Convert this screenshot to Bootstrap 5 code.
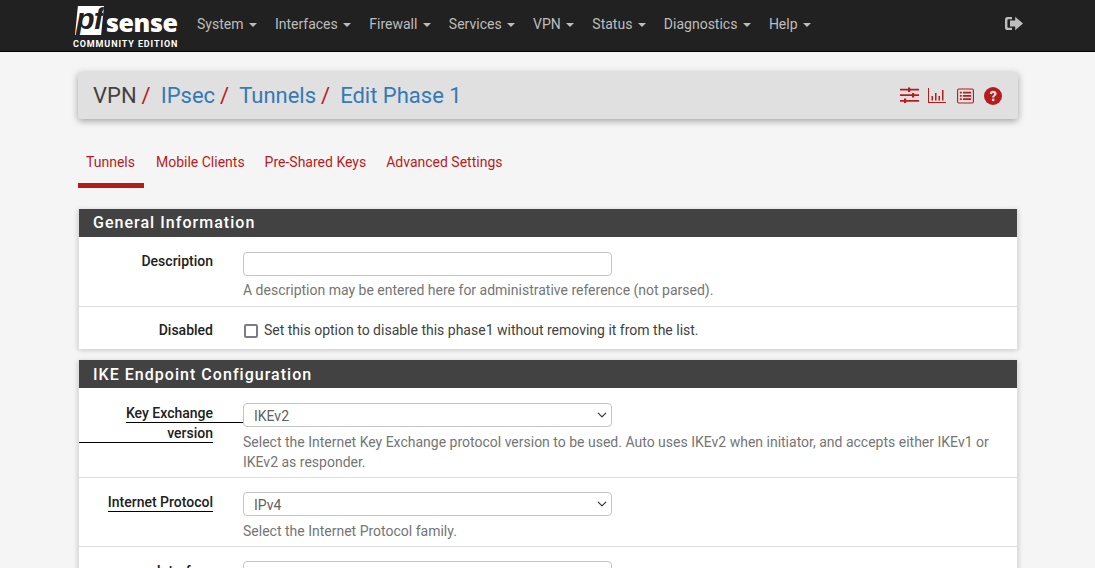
<!DOCTYPE html>
<html lang="en">
  <head>
    <meta charset="UTF-8" />
    <meta name="viewport" content="width=device-width, initial-scale=1.0" />
    <title>VPN: IPsec: Tunnels: Edit Phase 1</title>
    <link
      rel="stylesheet"
      href="https://cdn.jsdelivr.net/npm/bootstrap@5.3.0/dist/css/bootstrap.min.css"
    />
    <style>
      html,
      body {
        height: 568px;
        overflow: hidden;
      }
      body {
        background: #f5f5f5;
        font-family: Roboto, "Liberation Sans", sans-serif;
        font-size: 14px;
        color: #212121;
      }
      #top-bar {
        background: #212121;
        height: 52px;
        border-bottom: 1px solid #000;
        padding: 0 72px 3px 72px;
        flex-wrap: nowrap;
      }
      #logo {
        width: 106px;
        height: 46px;
        margin-right: 10px;
        margin-top: 3px;
        color: #fff;
        text-decoration: none;
        display: block;
        line-height: 1;
      }
      .logo-top {
        height: 30px;
        margin-top: 3px;
      }
      .logo-pf {
        background: #fff;
        color: #212121;
        width: 29px;
        height: 29px;
        margin-left: 3px;
        font: italic 700 30px/25px "Liberation Sans", sans-serif;
        letter-spacing: -1px;
        clip-path: polygon(10% 0, 100% 0, 90% 100%, 0 100%);
        text-align: center;
      }
      .logo-sense {
        font: 800 25px/32px "Open Sans", sans-serif;
        letter-spacing: -0.4px;
        margin-left: 2px;
        margin-top: 0;
      }
      .logo-edition {
        font: 700 9px/10px Roboto, sans-serif;
        letter-spacing: 0.88px;
        margin-top: 3px;
        margin-left: 1px;
        white-space: nowrap;
      }
      #top-bar .nav-link {
        color: #bdbdbd;
        padding: 0 9px;
        font-size: 14px;
        line-height: 20px;
      }
      .top-caret {
        display: inline-block;
        margin-left: 2px;
        vertical-align: 2px;
        border-top: 4px solid;
        border-left: 4px solid transparent;
        border-right: 4px solid transparent;
      }
      #logout-link {
        margin-bottom: 1px;
      }
      #page-wrap {
        width: 940px;
        margin-left: 78px;
      }
      #crumb-bar {
        height: 47px;
        margin-top: 20px;
        background: #e0e0e0;
        border-radius: 3px;
        box-shadow: 0 2px 7px rgba(0, 0, 0, 0.35);
        padding: 0 16px 0 15px;
      }
      #crumb-bar .breadcrumb {
        font-size: 22px;
        line-height: 30px;
        color: #424242;
        --bs-breadcrumb-item-padding-x: 0;
        --bs-breadcrumb-margin-bottom: 0;
        --bs-breadcrumb-divider: "";
      }
      #crumb-bar .breadcrumb-item + .breadcrumb-item::before {
        content: none;
      }
      #crumb-bar a {
        color: #337ab7;
        text-decoration: none;
      }
      .crumb-sep {
        color: #b71c1c;
        margin: 0 10px 0 5px;
      }
      .crumb-icons svg {
        display: block;
      }
      #sub-tabs {
        margin-top: 26px;
        height: 43px;
      }
      #sub-tabs .nav-link {
        color: #b71c1c;
        padding: 7px 9px 0;
        height: 43px;
        margin-right: 2px;
        font-size: 14px;
        line-height: 20px;
        border-radius: 0;
      }
      #sub-tabs .nav-link.active {
        border-bottom: 5px solid #b71c1c;
        padding-left: 8px;
        margin-right: 3px;
      }
      .form-panel {
        background: #fff;
        box-shadow: 0 1px 5px rgba(0, 0, 0, 0.2);
        border-radius: 0;
        border: 1px solid #e0e0e0;
        border-top: 0;
        border-bottom: 0;
      }
      #panel-general {
        margin-top: 21px;
      }
      #panel-ike {
        margin-top: 11px;
      }
      .panel-head {
        background: #424242;
        color: #fff;
        font-size: 16px;
        font-weight: 500;
        letter-spacing: 1.03px;
        line-height: 20px;
        padding: 4px 14px;
        height: 28px;
        margin: 0 -1px;
      }
      #panel-ike .panel-head {
        padding-top: 5px;
      }
      .form-line {
        padding-top: 15px;
        border-bottom: 1px solid #e0e0e0;
      }
      .form-line:last-child {
        border-bottom: 0;
      }
      #panel-ike .form-line + .form-line {
        padding-top: 14px;
      }
      .field-label {
        width: 164px;
        flex: none;
        padding-right: 30px;
        text-align: right;
        font-weight: 500;
        font-size: 14px;
        line-height: 20px;
        color: #212121;
        margin-top: -1px;
      }
      .field-label-req {
        margin-top: 0;
      }
      .field-body {
        flex: 1;
        min-width: 0;
      }
      .field-body .form-control,
      .field-body .form-select {
        width: 369px;
        height: 24px;
        min-height: 24px;
        padding: 2px 10px 0;
        border: 1px solid #c4c4c4;
        border-radius: 4px;
        font-size: 14px;
        color: #616161;
        box-shadow: none;
      }
      .field-body .form-select {
        background-position: right 2px center;
        background-size: 14px 10px;
      }
      .field-help {
        margin-top: 5px;
        padding-bottom: 5px;
        padding-right: 20px;
        font-size: 14px;
        line-height: 20px;
        color: #757575;
      }
      #panel-general .field-help {
        margin-top: 4px;
        padding-bottom: 6px;
      }
      .req-label {
        display: inline-block;
        border-bottom: 1px solid #000;
        line-height: 18px;
      }
      .req-first {
        padding-right: 30px;
        margin-right: -30px;
      }
      .req-second {
        display: block;
        margin-top: 1px;
      }
      .check-line {
        height: 42px;
        padding-top: 4px;
      }
      .check-line .form-check-input {
        width: 14px;
        height: 14px;
        margin: 2px 6px 0 1px;
        border: 2px solid #7b7b8c;
        border-radius: 2px;
        float: none;
      }
      .check-line .form-check-label {
        font-size: 14px;
        color: #424242;
      }
    </style>
  </head>
  <body>
    <nav id="top-bar" class="navbar navbar-expand d-flex align-items-center">
      <a id="logo" href="#" class="align-self-start">
        <div class="logo-top d-flex">
          <div class="logo-pf">pf</div>
          <div class="logo-sense">sense</div>
        </div>
        <div class="logo-edition">COMMUNITY EDITION</div>
      </a>
      <ul class="nav">
        <li class="nav-item"><a class="nav-link" href="#">System <span class="top-caret"></span></a></li>
        <li class="nav-item"><a class="nav-link" href="#">Interfaces <span class="top-caret"></span></a></li>
        <li class="nav-item"><a class="nav-link" href="#">Firewall <span class="top-caret"></span></a></li>
        <li class="nav-item"><a class="nav-link" href="#">Services <span class="top-caret"></span></a></li>
        <li class="nav-item"><a class="nav-link" href="#">VPN <span class="top-caret"></span></a></li>
        <li class="nav-item"><a class="nav-link" href="#">Status <span class="top-caret"></span></a></li>
        <li class="nav-item"><a class="nav-link" href="#">Diagnostics <span class="top-caret"></span></a></li>
        <li class="nav-item"><a class="nav-link" href="#">Help <span class="top-caret"></span></a></li>
      </ul>
      <a id="logout-link" href="#" class="ms-auto d-block">
        <svg width="18" height="15" viewBox="0 0 18 14" fill="#bdbdbd" class="d-block">
          <path d="M7 0.4H2.6A2.6 2.6 0 0 0 0 3V11a2.6 2.6 0 0 0 2.6 2.6H7V11.2H3.4a1 1 0 0 1-1-1V3.8a1 1 0 0 1 1-1H7Z"/>
          <path d="M5 3.9H10.2V0.2L18 7 10.2 13.8V10.1H5Z"/>
        </svg>
      </a>
    </nav>

    <div id="page-wrap">
      <header id="crumb-bar" class="d-flex align-items-center justify-content-between">
        <ol class="breadcrumb">
          <li class="breadcrumb-item">VPN<span class="crumb-sep">/</span></li>
          <li class="breadcrumb-item"><a href="#">IPsec</a><span class="crumb-sep">/</span></li>
          <li class="breadcrumb-item"><a href="#">Tunnels</a><span class="crumb-sep">/</span></li>
          <li class="breadcrumb-item"><a href="#">Edit Phase 1</a></li>
        </ol>
        <div class="crumb-icons d-flex align-items-center">
          <svg width="19" height="17" viewBox="0 0 19 17" fill="#b71c1c" style="margin-right:9px">
            <path d="M0 1.8H19V3.6H0ZM0 7.3H19V9.1H0ZM0 12.9H19V14.7H0Z"/>
            <path d="M8 0.5H10.2V4.9H8ZM12 6H14.2V10.4H12ZM4 11.6H6.2V16H4Z"/>
          </svg>
          <svg width="18" height="15" viewBox="0 0 18 15" fill="#b71c1c" style="margin-right:11px">
            <path d="M0 0H1V14H18V15H0Z"/>
            <path d="M3.5 8H5V12.5H3.5ZM7 5H8.5V12.5H7ZM10.5 8H12V12.5H10.5ZM14 2H15.5V12.5H14Z"/>
          </svg>
          <svg width="17" height="16" viewBox="0 0 18 16" style="margin-right:10px">
            <rect x="0.6" y="0.6" width="16.8" height="14.8" rx="1.5" fill="none" stroke="#b71c1c" stroke-width="1.2"/>
            <path fill="#b71c1c" d="M3 3.6H5V5.4H3ZM6.3 3.6H15V5.4H6.3ZM3 7H5V8.8H3ZM6.3 7H15V8.8H6.3ZM3 10.4H5V12.2H3ZM6.3 10.4H15V12.2H6.3Z"/>
          </svg>
          <svg width="18" height="18" viewBox="0 0 17 17">
            <circle cx="8.5" cy="8.5" r="8.5" fill="#b71c1c"/>
            <path d="M5.4 6.4C5.6 4.6 6.9 3.6 8.7 3.6C10.5 3.6 11.9 4.8 11.9 6.4C11.9 8.4 9.7 8.5 9.7 10H7.6C7.6 7.7 9.6 7.6 9.6 6.5C9.6 5.9 9.1 5.6 8.6 5.6C8 5.6 7.6 6 7.4 6.8Z" fill="#e0e0e0"/>
            <rect x="7.5" y="11" width="2.3" height="2.3" fill="#e0e0e0"/>
          </svg>
        </div>
      </header>

      <ul id="sub-tabs" class="nav">
        <li class="nav-item"><a class="nav-link active" href="#">Tunnels</a></li>
        <li class="nav-item"><a class="nav-link" href="#">Mobile Clients</a></li>
        <li class="nav-item"><a class="nav-link" href="#">Pre-Shared Keys</a></li>
        <li class="nav-item"><a class="nav-link" href="#">Advanced Settings</a></li>
      </ul>

      <section id="panel-general" class="form-panel">
        <h2 class="panel-head m-0">General Information</h2>
        <div class="form-line d-flex">
          <div class="field-label">Description</div>
          <div class="field-body">
            <input type="text" class="form-control" />
            <div class="field-help">A description may be entered here for administrative reference (not parsed).</div>
          </div>
        </div>
        <div class="form-line check-line d-flex align-items-center">
          <div class="field-label">Disabled</div>
          <div class="field-body d-flex align-items-center">
            <input type="checkbox" class="form-check-input" id="disabled" />
            <label class="form-check-label" for="disabled">Set this option to disable this phase1 without removing it from the list.</label>
          </div>
        </div>
      </section>

      <section id="panel-ike" class="form-panel">
        <h2 class="panel-head m-0">IKE Endpoint Configuration</h2>
        <div class="form-line d-flex">
          <div class="field-label field-label-req">
            <span class="req-label req-first">Key Exchange</span>
            <span class="req-label req-second">version</span>
          </div>
          <div class="field-body">
            <select class="form-select"><option>IKEv2</option></select>
            <div class="field-help">Select the Internet Key Exchange protocol version to be used. Auto uses IKEv2 when initiator, and accepts either IKEv1 or IKEv2 as responder.</div>
          </div>
        </div>
        <div class="form-line d-flex">
          <div class="field-label field-label-req"><span class="req-label">Internet Protocol</span></div>
          <div class="field-body">
            <select class="form-select"><option>IPv4</option></select>
            <div class="field-help">Select the Internet Protocol family.</div>
          </div>
        </div>
        <div class="form-line d-flex">
          <div class="field-label field-label-req"><span class="req-label">Interface</span></div>
          <div class="field-body">
            <select class="form-select"><option>WAN</option></select>
          </div>
        </div>
      </section>
    </div>

    <script src="https://cdn.jsdelivr.net/npm/bootstrap@5.3.0/dist/js/bootstrap.bundle.min.js"></script>
  </body>
</html>
